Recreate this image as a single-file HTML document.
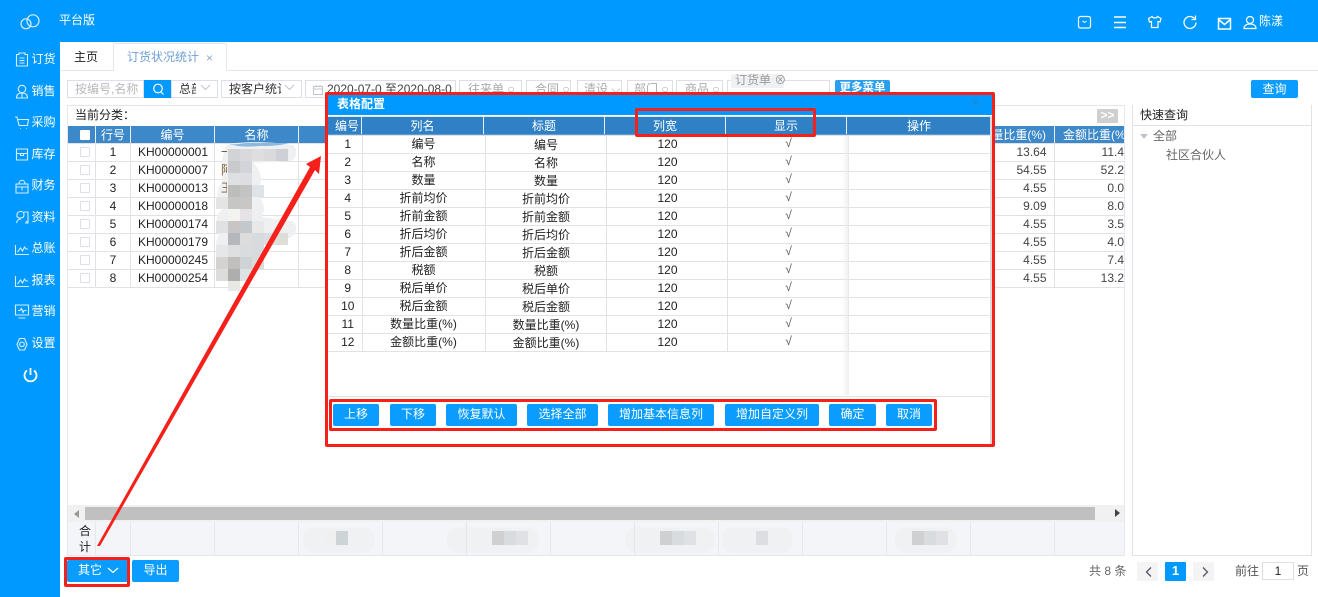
<!DOCTYPE html>
<html lang="zh"><head><meta charset="utf-8"><title>订货状况统计</title>
<style>
*{box-sizing:border-box}
html,body{margin:0;padding:0}
body{width:1318px;height:597px;position:relative;overflow:hidden;background:#fff;font:12px/18px "Liberation Sans","Noto Sans CJK SC",sans-serif;color:#222}
.a{position:absolute;white-space:nowrap}
.side{position:absolute;left:31.500px;color:#fff;font-size:12px;line-height:16px;letter-spacing:0}
.box{position:absolute;top:80px;height:18px;border:1px solid #dcdfe6;overflow:hidden;white-space:nowrap;background:#fff;color:#555;padding-left:7px;line-height:16px}
.btn{position:absolute;background:#0a9dff;color:#fff;text-align:center;border-radius:2px}
table{position:absolute;border-collapse:collapse;table-layout:fixed;font-size:12px}
td{padding:0;height:18px;line-height:17px;text-align:center;border:1px solid #e2e2e6;overflow:hidden;white-space:nowrap}
td.r{text-align:right;padding-right:7px;color:#444}
td.l{text-align:left}
.hd{position:absolute;background:#3d88c8;color:#fff;text-align:center;height:17px;line-height:18px;border-right:1px solid #e8eef5}
.cb{display:inline-block;width:10px;height:10px;border:1px solid #dcdfe6;border-radius:1px;vertical-align:-1px;background:#fff}
.main td:first-child{padding-left:7px;border-left:none}
.main td:nth-child(2){padding-left:1px}
.main td:nth-child(3){padding-left:2px}
.m td{color:#222}
.m td:first-child{border-left:none;padding-left:7px}
.m td:nth-child(3){line-height:15px;padding-top:2px;padding-left:1px}
.m td:nth-child(4){padding-left:2px}
.m td:nth-child(5){line-height:15px;padding-bottom:2px;padding-left:2px;color:#555}
.red{position:absolute;border:3px solid #f5201a;border-radius:2px}
.ft{position:absolute;top:522px;height:33px;width:1px;background:#e6e7ec}
.stub{position:absolute;left:221px;width:6px;height:14px;overflow:hidden;line-height:14px;color:#7a5a30}
</style></head><body>

<!-- top bar & side -->
<div class="a" style="left:0;top:0;width:1318px;height:42px;background:#0099ff"></div>
<div class="a" style="left:0;top:0;width:60px;height:597px;background:#0099ff"></div>
<svg class="a" style="left:20px;top:14px" width="20" height="16" viewBox="0 0 20 16" fill="none" stroke="#d7eefd" stroke-width="1.200"><circle cx="6" cy="9.800" r="5"/><circle cx="13" cy="6.800" r="6"/></svg>
<div class="a" style="left:59px;top:11px;color:#fff;font-size:12px">平台版</div>

<div class="side" style="top:51px">订货</div><div class="side" style="top:83px">销售</div><div class="side" style="top:114px">采购</div><div class="side" style="top:146px">库存</div><div class="side" style="top:177px">财务</div><div class="side" style="top:209px">资料</div><div class="side" style="top:240px">总账</div><div class="side" style="top:272px">报表</div><div class="side" style="top:303px">营销</div><div class="side" style="top:335px">设置</div>
<svg class="a" style="left:14px;top:50px" width="16" height="310" viewBox="0 0 16 310" fill="none" stroke="#d5edff" stroke-width="1.100">
<path d="M2.500 4.500h2.500V3h6v1.500h2.500v11.500h-11zM5.500 8h5M5.500 10.500h5M5.500 13h5"/>
<circle cx="8" cy="39" r="3.700"/><path d="M2.500 48c0-3.500 2-5 5.500-5s5.500 1.500 5.500 5zM8 43v5"/>
<path d="M1 67h2l2 8.500h8.500l1-6H3.500M6 78.500h.8M12 78.500h.8"/>
<path d="M2.500 99h11v11h-11zM2.500 103.500h11M6.500 103.500v2h3v-2"/>
<path d="M2 134h12v9H2zM5 134c0-5 6-5 6 0M8 136.500v4M2 137h12"/>
<path d="M3 165c0-3 2-3.500 4-3.500 1.500 0 3 .5 3 3 0 2-1 3.500-3.500 3.500-3 0-4-1.500-3.500-3M2.500 173c.5-2.500 2-4 4.500-4M10 162h4v11h-3M14 173l-2-2"/>
<path d="M1.500 195v9.500h13.500M3.500 202l3-4 2 3 2-4 1.500 2h2"/>
<path d="M1.500 226v10.500h13.500M3.500 234l3-4 2 3 2-4 1.500 2h2"/>
<path d="M1.500 255h13v10h-13zM4.500 268h7M4 260.500h2l1.500-2 1.500 4 1-2h2.500"/>
<path d="M5.500 288.500h5l2.500 6-2.500 5.500h-5L3 294.500z"/><circle cx="8" cy="294.300" r="2.300"/>
</svg>
<svg class="a" style="left:23px;top:367px" width="15" height="16" viewBox="0 0 15 16" fill="none" stroke="#fff" stroke-width="1.800"><path d="M4 3.500a6 6 0 1 0 7 0M7.500 1v7"/></svg>

<!-- header right icons -->
<svg class="a" style="left:1076px;top:12px" width="215" height="20" viewBox="0 0 215 20" fill="none" stroke="#fff" stroke-width="1.200">
<rect x="2.500" y="4.500" width="12" height="11.500" rx="2"/><path d="M6.500 9l2 1.500 2-1.500" stroke-width="1"/>
<path d="M38 5h12M38 10.500h12M38 15.500h12" stroke-width="1.500"/>
<path d="M76 4.500L72.500 6.500l1 3.500 2-.5v6H82v-6l2 .5 1-3.500-3.500-2c-1 2-4.500 2-5.500 0z"/>
<path d="M118.500 6.500A6 6 0 1 0 120 10.500M119.500 3.500v4h-4" stroke-width="1.300"/>
<path d="M142.500 6.500h12v10.500h-12zM142.500 7.500l6 5 6-5" stroke-width="1.500"/>
<circle cx="174" cy="8" r="3.500"/><path d="M168 16.500c0-3 2.500-4.500 6-4.500s6 1.500 6 4.500z"/>
</svg>
<div class="a" style="left:1259px;top:12px;color:#fff;font-size:12px">陈漾</div>

<!-- tabs -->
<div class="a" style="left:60px;top:70px;width:1258px;height:1px;background:#e4e7ed"></div>
<div class="a" style="left:74px;top:48px">主页</div>
<div class="a" style="left:113px;top:43px;width:114px;height:28px;border:1px solid #e4e7ed;border-bottom:none;background:#fff;border-radius:2px 2px 0 0"></div>
<div class="a" style="left:127px;top:48px;color:#6f9fd8">订货状况统计</div>
<div class="a" style="left:206px;top:49px;color:#8aa8cf">×</div>

<!-- toolbar -->
<div class="box" style="left:67px;width:77px;color:#b8b8b8">按编号,名称</div>
<div class="a" style="left:144px;top:80px;width:27px;height:18px;background:#0099ff"></div>
<svg class="a" style="left:151px;top:82px" width="14" height="14" fill="none" stroke="#fff" stroke-width="1.200"><circle cx="7" cy="6.500" r="4.300"/><path d="M10 10l2.500 2.500"/></svg>
<div class="box" style="left:171px;width:47px"><span style="display:inline-block;width:17px;overflow:hidden;vertical-align:top;color:#333">总部</span></div>
<div class="box" style="left:221px;width:81px"><span style="display:inline-block;width:52px;overflow:hidden;vertical-align:top;color:#333">按客户统计</span></div>
<svg class="a" style="left:200px;top:84px" width="100" height="8" fill="none" stroke="#c0c4cc"><path d="M1 1l4.500 4.500L10 1M85 1l4.500 4.500L94 1"/></svg>
<div class="box" style="left:305px;width:151px;padding-left:21px;color:#444">2020-07-0 至2020-08-0</div>
<svg class="a" style="left:312px;top:84px" width="12" height="12" fill="none" stroke="#c0c4cc"><path d="M1.500 2.500h9v8h-9zM1.500 5h9M4 1v2M8 1v2"/></svg>
<div class="box" style="left:459px;width:63px;padding-left:8px;color:#aaa">往来单 ○</div>
<div class="box" style="left:526px;width:45px;padding-left:8px;color:#aaa">合同 ○</div>
<div class="box" style="left:577px;width:45px;padding-left:6px;color:#aaa">清设 ⌵</div>
<div class="box" style="left:627px;width:46px;padding-left:6px;color:#aaa">部门 ○</div>
<div class="box" style="left:676px;width:47px;padding-left:8px;color:#aaa">商品 ○</div>
<div class="box" style="left:727px;width:103px"></div>
<div class="a" style="left:731px;top:74px;width:53px;height:14px;background:#f0f1f3;color:#999;line-height:12px;padding-left:4px;border-radius:2px">订货单 ⊗</div>
<div class="btn" style="left:835px;top:80px;width:55px;height:18px;font-weight:bold;font-size:11.500px;line-height:17px;background:#2a9ff0">更多菜单</div>
<div class="btn" style="left:1251px;top:80px;width:47px;height:18px;line-height:18px">查询</div>

<!-- main table -->
<div class="a" style="left:67px;top:105px;width:1058px;height:451px;border:1px solid #e4e7ed;border-bottom:2px solid #e4e7ed;background:#fff"></div>
<div class="a" style="left:75px;top:106px">当前分类：</div>
<div class="a" style="left:1097px;top:109px;width:21px;height:14px;background:#cfcfcf;color:#fff;font-weight:bold;line-height:13px;text-align:center;border-radius:1px">&gt;&gt;</div>
<div class="a" style="left:68px;top:126px;width:1056px;height:17px;background:#3d88c8"></div>
<div class="hd" style="left:68px;top:126px;width:28px;text-align:left;padding-left:12px"><span class="cb" style="width:10px;height:10px;border:none"></span></div>
<div class="hd" style="left:96px;top:126px;width:35px">行号</div>
<div class="hd" style="left:131px;top:126px;width:84px">编号</div>
<div class="hd" style="left:215px;top:126px;width:84px">名称</div>
<div class="hd" style="left:988px;top:126px;width:67px;text-align:right;padding-right:8px;overflow:hidden">量比重(%)</div>
<div class="hd" style="left:1055px;top:126px;width:69px;text-align:left;padding-left:8px;overflow:hidden;border-right:none;white-space:nowrap">金额比重(%)</div>
<table class="main" style="left:68px;top:143px;width:1056px">
<colgroup><col style="width:27px"><col style="width:35px"><col style="width:84px"><col style="width:84px"><col style="width:690px"><col style="width:66px"><col style="width:70px"></colgroup>
<tr><td><i class="cb"></i></td><td>1</td><td>KH00000001</td><td class="l"></td><td></td><td class="r">13.64</td><td class="r" style="padding-right:0;border-right:none">11.4</td></tr>
<tr><td><i class="cb"></i></td><td>2</td><td>KH00000007</td><td class="l"></td><td></td><td class="r">54.55</td><td class="r" style="padding-right:0;border-right:none">52.2</td></tr>
<tr><td><i class="cb"></i></td><td>3</td><td>KH00000013</td><td class="l"></td><td></td><td class="r">4.55</td><td class="r" style="padding-right:0;border-right:none">0.0</td></tr>
<tr><td><i class="cb"></i></td><td>4</td><td>KH00000018</td><td class="l"></td><td></td><td class="r">9.09</td><td class="r" style="padding-right:0;border-right:none">8.0</td></tr>
<tr><td><i class="cb"></i></td><td>5</td><td>KH00000174</td><td class="l"></td><td></td><td class="r">4.55</td><td class="r" style="padding-right:0;border-right:none">3.5</td></tr>
<tr><td><i class="cb"></i></td><td>6</td><td>KH00000179</td><td class="l"></td><td></td><td class="r">4.55</td><td class="r" style="padding-right:0;border-right:none">4.0</td></tr>
<tr><td><i class="cb"></i></td><td>7</td><td>KH00000245</td><td class="l"></td><td></td><td class="r">4.55</td><td class="r" style="padding-right:0;border-right:none">7.4</td></tr>
<tr><td><i class="cb"></i></td><td>8</td><td>KH00000254</td><td class="l"></td><td></td><td class="r">4.55</td><td class="r" style="padding-right:0;border-right:none">13.2</td></tr>
</table>

<!-- blur over names -->
<svg class="a" style="left:210px;top:135px" width="100" height="170" viewBox="210 135 100 170">
<path fill="#eef0f1" d="M226 146c10-6 50-4 66-1 6 1 6 14-2 16l-36 2c8 10 10 18 2 30 8 8 10 16 6 24l30 4c8 6 4 16-6 18l-22 1c2 12-8 16-14 16l-6 16c-6 2-22 2-24-4-2-8-8-26 0-34-4-12-6-18 2-24-6-10-6-20 0-28 0-8-2-20 4-36z"/>
<path fill="#8db8dc" d="M227 143c8 3 14 0 20 0h42c-10 3-20 3-30 3-10 1-24 1-32-3z"/>
<g>
<rect x="228" y="149" width="12" height="12" fill="#d2d3d4"/><rect x="240" y="149" width="12" height="12" fill="#d9d9dd"/><rect x="252" y="149" width="12" height="12" fill="#dededf"/><rect x="264" y="149" width="12" height="12" fill="#dadadc"/><rect x="276" y="149" width="12" height="12" fill="#cfcfd6"/>
<rect x="228" y="161" width="12" height="12" fill="#c9cacb"/><rect x="240" y="161" width="12" height="12" fill="#d2d4d9"/>
<rect x="228" y="173" width="12" height="12" fill="#dfe0e3"/><rect x="240" y="173" width="12" height="12" fill="#dddee2"/>
<rect x="228" y="185" width="12" height="12" fill="#bdbdbc"/><rect x="240" y="185" width="12" height="12" fill="#c3c3c3"/><rect x="252" y="185" width="12" height="12" fill="#dde3e6"/>
<rect x="228" y="197" width="12" height="12" fill="#c6c6c6"/><rect x="240" y="197" width="12" height="12" fill="#c8c7c6"/><rect x="216" y="197" width="12" height="12" fill="#e6e4e3"/>
<rect x="228" y="209" width="12" height="12" fill="#f2f2f1"/><rect x="240" y="209" width="12" height="12" fill="#e5e3e5"/>
<rect x="216" y="221" width="12" height="12" fill="#dfe1e3"/><rect x="228" y="221" width="12" height="12" fill="#c9c5c5"/><rect x="240" y="221" width="12" height="12" fill="#c2c8cb"/><rect x="252" y="221" width="12" height="12" fill="#e8e8e8"/>
<rect x="228" y="233" width="12" height="12" fill="#b4b8bc"/><rect x="240" y="233" width="12" height="12" fill="#dcdcdc"/><rect x="252" y="233" width="12" height="12" fill="#d8dbde"/><rect x="264" y="233" width="12" height="12" fill="#dcdde0"/><rect x="276" y="233" width="12" height="12" fill="#deded9"/>
<rect x="216" y="245" width="12" height="12" fill="#e6e7e8"/><rect x="228" y="245" width="12" height="12" fill="#dddfe0"/><rect x="240" y="245" width="12" height="12" fill="#d8dcdf"/><rect x="252" y="245" width="12" height="12" fill="#d8dbdd"/>
<rect x="216" y="257" width="12" height="12" fill="#d4d3d1"/><rect x="228" y="257" width="12" height="12" fill="#c0bfbd"/><rect x="240" y="257" width="12" height="12" fill="#ced3d6"/><rect x="252" y="257" width="12" height="12" fill="#d8dadb"/>
<rect x="216" y="269" width="12" height="12" fill="#dcdcda"/><rect x="228" y="269" width="12" height="12" fill="#adaead"/><rect x="240" y="269" width="12" height="12" fill="#dde2e4"/>
<rect x="228" y="281" width="12" height="10" fill="#e8e8e4"/>
</g></svg>
<div class="stub" style="top:145px">一</div><div class="stub" style="top:163px">阿</div><div class="stub" style="top:181px">王</div>

<!-- scrollbar & footer -->
<div class="a" style="left:68px;top:505px;width:1056px;height:17px;background:#f1f1f1"></div>
<div class="a" style="left:85px;top:507px;width:1010px;height:13px;background:#c0c0c0"></div>
<div class="a" style="left:74px;top:510px;border:4px solid transparent;border-right:5px solid #999;border-left:none"></div>
<div class="a" style="left:1115px;top:509px;border:4px solid transparent;border-left:5px solid #444;border-right:none"></div>
<div class="a" style="left:68px;top:522px;width:1056px;height:33px;background:#f4f5f9"></div>
<svg class="a" style="left:300px;top:525px" width="700" height="30" viewBox="300 525 700 30">
<g fill="#f0f1f3"><rect x="303" y="527" width="72" height="26" rx="12"/><rect x="447" y="527" width="92" height="26" rx="12"/><rect x="625" y="527" width="90" height="26" rx="12"/><rect x="722" y="527" width="70" height="26" rx="12"/><rect x="895" y="527" width="62" height="26" rx="12"/></g>
<rect x="324" y="531" width="12" height="14" fill="#f0f0f0"/><rect x="336" y="531" width="12" height="14" fill="#ced3d6"/>
<rect x="492" y="531" width="12" height="14" fill="#cfd0d2"/><rect x="504" y="531" width="12" height="14" fill="#d9dcdf"/><rect x="516" y="531" width="12" height="14" fill="#e0e1e4"/>
<rect x="660" y="531" width="12" height="14" fill="#cfd0d2"/><rect x="672" y="531" width="12" height="14" fill="#d9dcdf"/><rect x="684" y="531" width="12" height="14" fill="#e0e1e4"/>
<rect x="756" y="531" width="12" height="14" fill="#dcdee2"/>
<rect x="912" y="531" width="12" height="14" fill="#cfd0d2"/><rect x="924" y="531" width="12" height="14" fill="#d9dcdf"/><rect x="936" y="531" width="12" height="14" fill="#e0e1e4"/>
</svg>
<div class="ft" style="left:95px"></div><div class="ft" style="left:130px"></div><div class="ft" style="left:214px"></div><div class="ft" style="left:298px"></div><div class="ft" style="left:382px"></div><div class="ft" style="left:466px"></div><div class="ft" style="left:550px"></div><div class="ft" style="left:634px"></div><div class="ft" style="left:718px"></div><div class="ft" style="left:802px"></div><div class="ft" style="left:886px"></div><div class="ft" style="left:970px"></div><div class="ft" style="left:1054px"></div>
<div class="a" style="left:79px;top:523px;line-height:16px;white-space:normal;width:12px">合计</div>

<!-- bottom -->
<div class="btn" style="left:67px;top:560px;width:61px;height:22px;line-height:21px;text-align:left;padding-left:11px">其它</div>
<svg class="a" style="left:107px;top:567px" width="12" height="7" fill="none" stroke="#fff" stroke-width="1.200"><path d="M1 1l5 4.500L11 1"/></svg>
<div class="btn" style="left:132px;top:560px;width:47px;height:22px;line-height:21px">导出</div>
<div class="a" style="left:1089px;top:562px;color:#666">共 8 条</div>
<div class="a" style="left:1137px;top:562px;width:21px;height:19px;background:#f4f4f5"></div>
<svg class="a" style="left:1145px;top:566px" width="8" height="12" fill="none" stroke="#556" stroke-width="1.300"><path d="M6 1.500L1.500 6 6 10.500"/></svg>
<div class="a" style="left:1165px;top:562px;width:21px;height:19px;background:#0099ff;color:#fff;text-align:center;font-weight:bold;font-size:13px;border-radius:1px">1</div>
<div class="a" style="left:1193px;top:562px;width:21px;height:19px;background:#f4f4f5"></div>
<svg class="a" style="left:1201px;top:566px" width="8" height="12" fill="none" stroke="#556" stroke-width="1.300"><path d="M2 1.500L6.500 6 2 10.500"/></svg>
<div class="a" style="left:1235px;top:562px;color:#555">前往</div>
<div class="a" style="left:1262px;top:562px;width:32px;height:18px;border:1px solid #dcdfe6;text-align:center;line-height:16px">1</div>
<div class="a" style="left:1297px;top:562px;color:#555">页</div>

<!-- right panel -->
<div class="a" style="left:1132px;top:105px;width:180px;height:451px;border:1px solid #e2e2e6;border-top:none"></div>
<div class="a" style="left:1133px;top:125px;width:178px;height:1px;background:#e2e2e6"></div>
<div class="a" style="left:1140px;top:106px">快速查询</div>
<div class="a" style="left:1140px;top:134px;border:4px solid transparent;border-top:5px solid #c0c4cc;border-bottom:none"></div>
<div class="a" style="left:1153px;top:127px;color:#666">全部</div>
<div class="a" style="left:1166px;top:146px;color:#666">社区合伙人</div>

<!-- modal -->
<div class="a" style="left:327px;top:94px;width:666px;height:351px;background:#fff;border-right:1px solid #4a90c8"></div>
<div class="a" style="left:327px;top:94px;width:666px;height:21px;background:#0099ff"></div>
<div class="a" style="left:337px;top:95px;color:#fff;font-weight:bold">表格配置</div>
<div class="a" style="left:971px;top:93px;color:#2b80c8;font-size:14px">×</div>
<div class="a" style="left:327px;top:116px;width:664px;height:20px;background:#2f80c5;border-top:1px solid #dbe7f2;border-bottom:2px solid #5b9bd0"></div>
<div class="hd" style="left:327px;top:117px;width:35px;background:none;padding-left:6px">编号</div>
<div class="hd" style="left:362px;top:117px;width:122px;background:none">列名</div>
<div class="hd" style="left:484px;top:117px;width:121px;background:none">标题</div>
<div class="hd" style="left:605px;top:117px;width:121px;background:none">列宽</div>
<div class="hd" style="left:726px;top:117px;width:121px;background:none">显示</div>
<div class="hd" style="left:847px;top:117px;width:144px;background:none;border-right:none">操作</div>
<table class="m" style="left:327px;top:135px;width:664px">
<colgroup><col style="width:35px"><col style="width:123px"><col style="width:121px"><col style="width:121px"><col style="width:121px"><col style="width:143px"></colgroup>
<tr><td>1</td><td>编号</td><td>编号</td><td>120</td><td>√</td><td></td></tr>
<tr><td>2</td><td>名称</td><td>名称</td><td>120</td><td>√</td><td></td></tr>
<tr><td>3</td><td>数量</td><td>数量</td><td>120</td><td>√</td><td></td></tr>
<tr><td>4</td><td>折前均价</td><td>折前均价</td><td>120</td><td>√</td><td></td></tr>
<tr><td>5</td><td>折前金额</td><td>折前金额</td><td>120</td><td>√</td><td></td></tr>
<tr><td>6</td><td>折后均价</td><td>折后均价</td><td>120</td><td>√</td><td></td></tr>
<tr><td>7</td><td>折后金额</td><td>折后金额</td><td>120</td><td>√</td><td></td></tr>
<tr><td>8</td><td>税额</td><td>税额</td><td>120</td><td>√</td><td></td></tr>
<tr><td>9</td><td>税后单价</td><td>税后单价</td><td>120</td><td>√</td><td></td></tr>
<tr><td>10</td><td>税后金额</td><td>税后金额</td><td>120</td><td>√</td><td></td></tr>
<tr><td>11</td><td>数量比重(%)</td><td>数量比重(%)</td><td>120</td><td>√</td><td></td></tr>
<tr><td>12</td><td>金额比重(%)</td><td>金额比重(%)</td><td>120</td><td>√</td><td></td></tr>
</table>
<div class="a" style="left:842px;top:136px;width:7px;height:259px;background:linear-gradient(90deg,rgba(235,235,235,0),rgba(235,235,235,.8))"></div>
<div class="a" style="left:990px;top:116px;width:2px;height:330px;background:#d9d9d9"></div>
<div class="a" style="left:327px;top:396px;width:664px;height:1px;background:#e2e2e2"></div>
<div class="btn" style="left:333px;top:404px;width:46px;height:22px;line-height:21px">上移</div>
<div class="btn" style="left:390px;top:404px;width:46px;height:22px;line-height:21px">下移</div>
<div class="btn" style="left:446px;top:404px;width:71px;height:22px;line-height:21px">恢复默认</div>
<div class="btn" style="left:527px;top:404px;width:71px;height:22px;line-height:21px">选择全部</div>
<div class="btn" style="left:608px;top:404px;width:106px;height:22px;line-height:21px">增加基本信息列</div>
<div class="btn" style="left:725px;top:404px;width:94px;height:22px;line-height:21px">增加自定义列</div>
<div class="btn" style="left:829px;top:404px;width:47px;height:22px;line-height:21px">确定</div>
<div class="btn" style="left:886px;top:404px;width:46px;height:22px;line-height:21px">取消</div>

<!-- annotations -->
<div class="red" style="left:325px;top:92px;width:670px;height:355px"></div>
<div class="red" style="left:635px;top:108px;width:181px;height:29px"></div>
<div class="red" style="left:329px;top:399px;width:608px;height:32px"></div>
<div class="red" style="left:64px;top:557px;width:66px;height:30px"></div>
<svg class="a" style="left:90px;top:150px" width="240" height="400" viewBox="90 150 240 400"><path fill="#f5201a" d="M97 546L310 167l-4-3 15-8-2 18-4-4L100 546z"/></svg>
</body></html>
